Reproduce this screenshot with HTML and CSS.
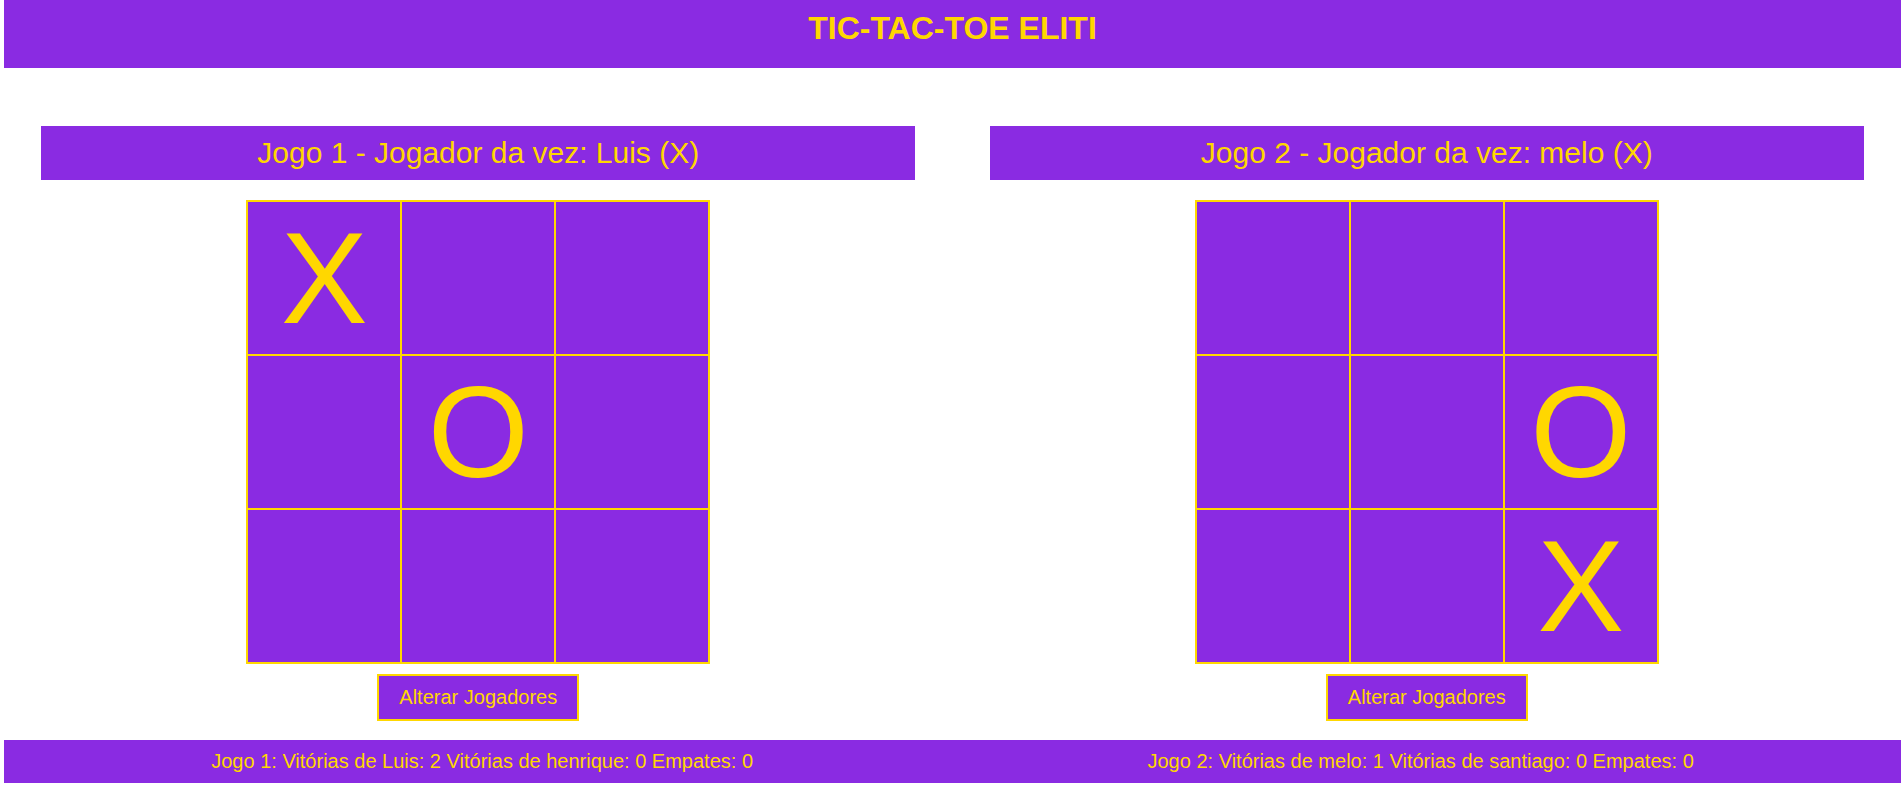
FILE: index.html
```html
<!DOCTYPE html>
<html lang="pt-BR">
  <head>
    <meta charset="UTF-8" />
    <meta name="viewport" content="width=device-width, initial-scale=1.0" />
    <title>Tic-Tac-Toe Eliti</title>
    <link rel="stylesheet" href="styles.css">
  </head>
  <body>
    <header>
      <h1>TIC-TAC-TOE ELITI</h1>
    </header>

    <div class="games">
      <div class="game" id="game-1">
        <h2 class="game-title">Jogo 1 - Jogador da vez: Luis (X)</h2>
        <div class="board">
          <div class="cell">X</div>
          <div class="cell"></div>
          <div class="cell"></div>
          <div class="cell"></div>
          <div class="cell">O</div>
          <div class="cell"></div>
          <div class="cell"></div>
          <div class="cell"></div>
          <div class="cell"></div>
        </div>
        <button class="change-players">Alterar Jogadores</button>
      </div>

      <div class="game" id="game-2">
        <h2 class="game-title">Jogo 2 - Jogador da vez: melo (X)</h2>
        <div class="board">
          <div class="cell"></div>
          <div class="cell"></div>
          <div class="cell"></div>
          <div class="cell"></div>
          <div class="cell"></div>
          <div class="cell">O</div>
          <div class="cell"></div>
          <div class="cell"></div>
          <div class="cell">X</div>
        </div>
        <button class="change-players">Alterar Jogadores</button>
      </div>
    </div>

    <footer class="scoreboard">
      <p>Jogo 1: Vitórias de Luis: 2 Vitórias de henrique: 0 Empates: 0</p>
      <p>Jogo 2: Vitórias de melo: 1 Vitórias de santiago: 0 Empates: 0</p>
    </footer>
  </body>
</html>
```

FILE: styles.css
```css
body {
  font-family: "Liberation Sans", Arial, sans-serif;
  margin: 0 0 0 4px;
  padding: 0;
  background-color: #ffffff;
  color: #ffd700;
}

header {
  background-color: #8a2be2;
  padding: 10px 0 21px;
  text-align: center;
}

header h1 {
  margin: 0;
  font-size: 32px;
  font-weight: bold;
}

.games {
  display: flex;
  justify-content: space-around; /* same space on both sides of each game */
  margin-top: 58px;
}

.game {
  width: 874px;
  display: flex;
  flex-direction: column;
  align-items: center;
}

.game-title {
  align-self: stretch;
  margin: 0;
  padding: 10px;
  background-color: #8a2be2;
  font-size: 30px;
  font-weight: normal;
  text-align: center;
}

.board {
  display: grid;
  grid-template-columns: repeat(3, 152px);
  grid-template-rows: repeat(3, 152px);
  gap: 2px;
  padding: 2px;
  margin-top: 20px;
  background-color: #ffd700; /* shows through the gaps as grid lines */
}

.cell {
  background-color: #8a2be2;
  display: flex;
  align-items: center;
  justify-content: center;
  font-size: 130px;
  cursor: pointer;
}

.change-players {
  margin-top: 10px;
  padding: 10px 20px;
  background-color: #8a2be2;
  color: #ffd700;
  border: 2px solid #ffd700;
  font-family: inherit;
  font-size: 20px;
  cursor: pointer;
}

.scoreboard {
  display: flex;
  justify-content: space-around;
  margin-top: 19px;
  padding: 10px;
  background-color: #8a2be2;
  font-size: 20px;
}

.scoreboard p {
  margin: 0;
}
```
